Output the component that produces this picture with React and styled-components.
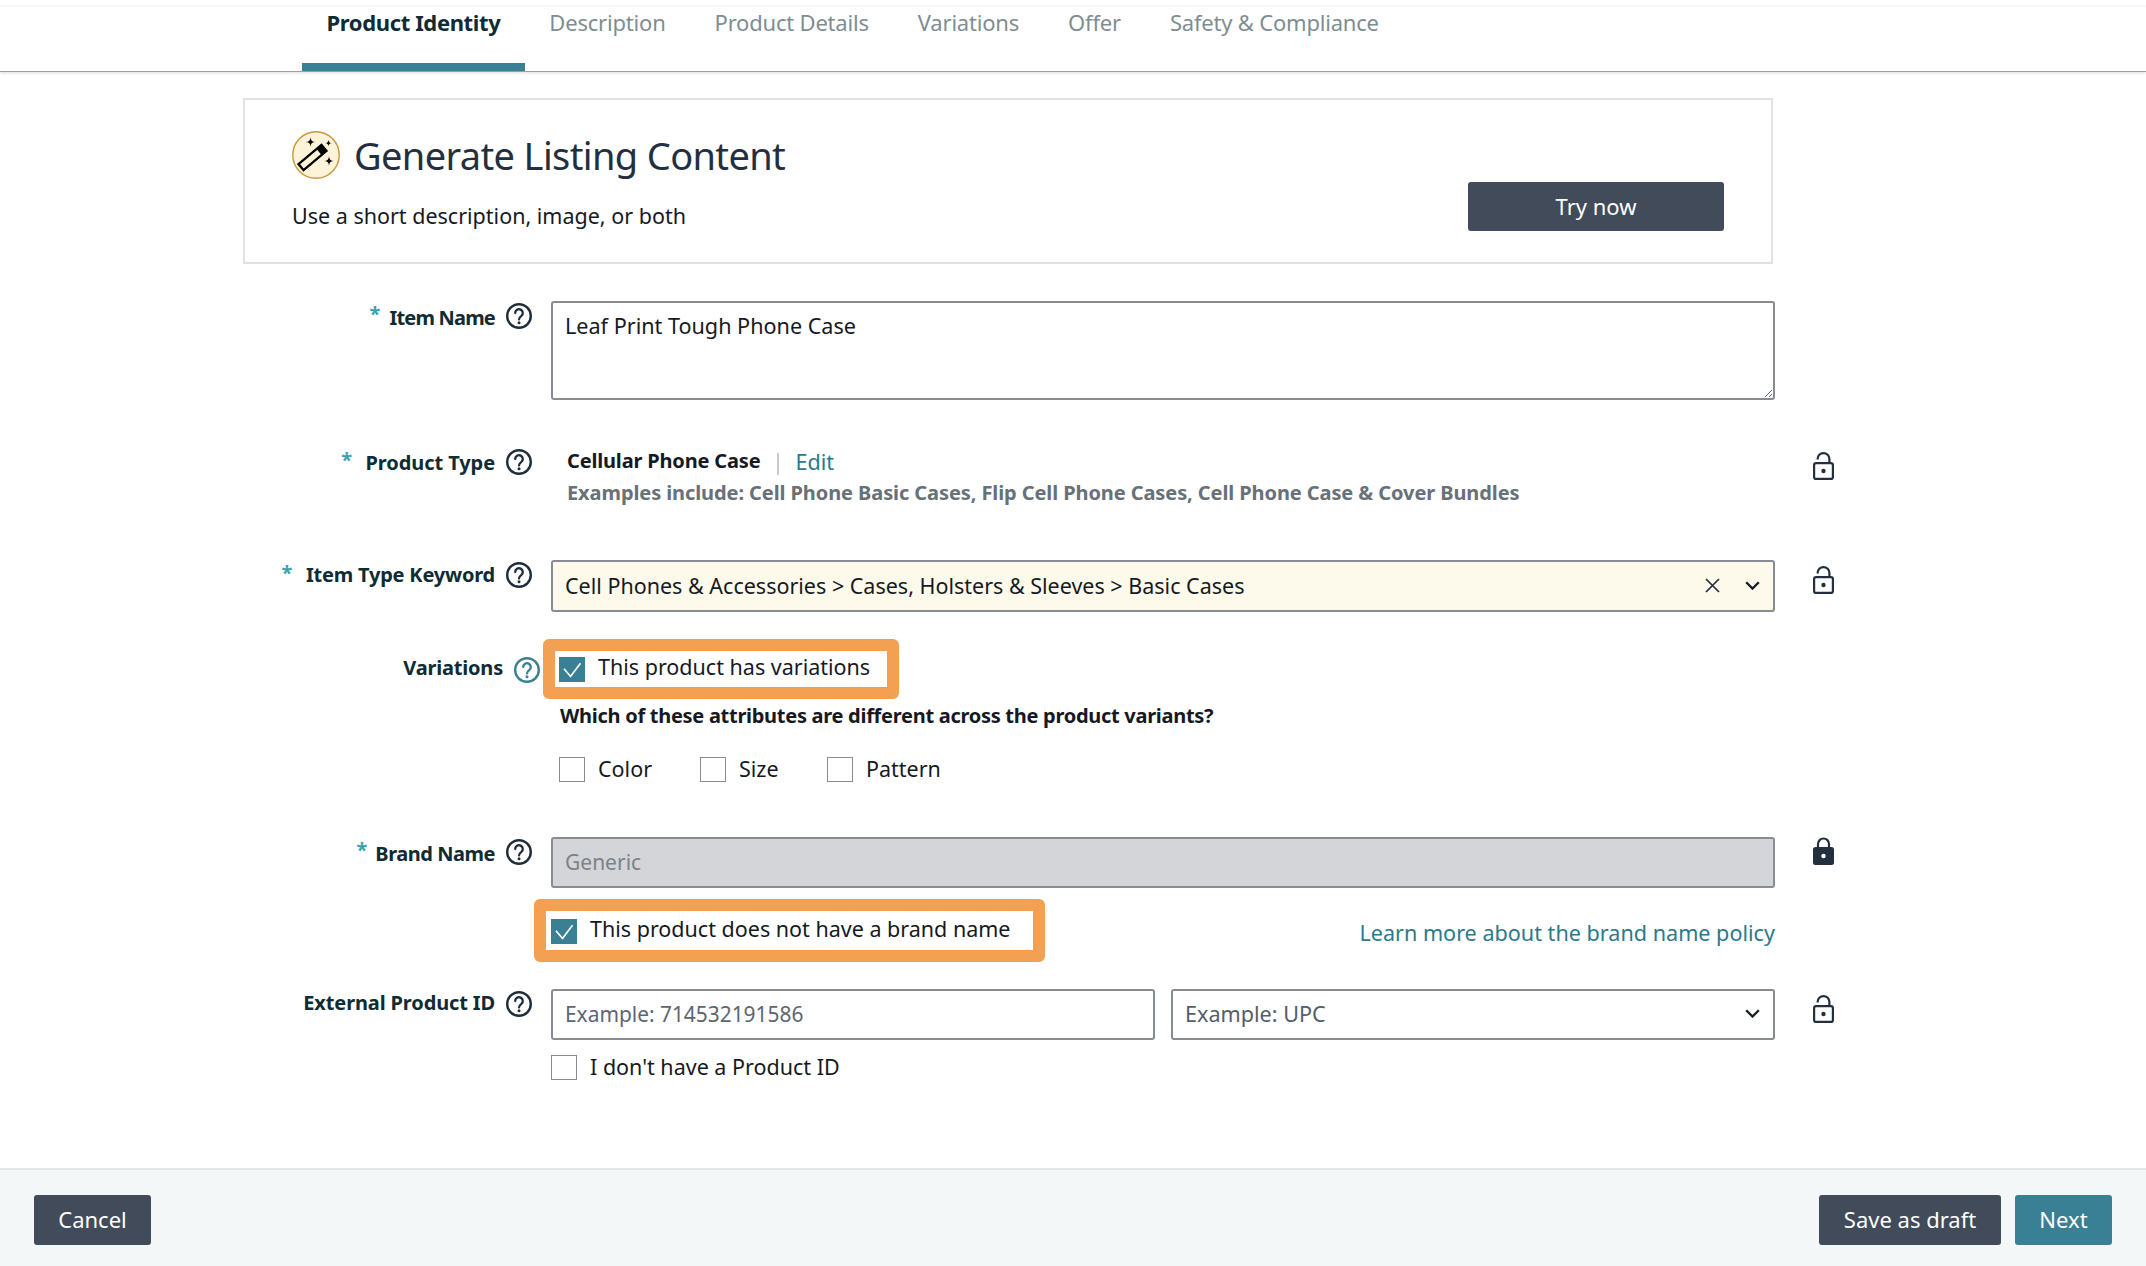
import React from "react";
import styled, { createGlobalStyle } from "styled-components";

const Global = createGlobalStyle`
  html, body { margin: 0; padding: 0; background: #fff; }
  * { box-sizing: border-box; }
  body { font-family: "Noto Sans", "Liberation Sans", sans-serif; color: #16191f; }
`;

const Page = styled.div`
  display: flex;
  flex-direction: column;
  height: 1266px;
  padding-top: 6px;
  overflow: hidden;
`;

const TabBar = styled.nav`
  display: flex;
  flex: none;
  height: 66px;
  padding-left: 302px;
  border-top: 1px solid #f4f4f4;
  border-bottom: 1px solid #9b9fa3;
  box-shadow: 0 1px 3px rgba(0, 0, 0, 0.14);
`;

const Tab = styled.div`
  padding: 0 24.5px;
  font-size: 22px;
  line-height: 30px;
  letter-spacing: ${(p) => (p.$active ? -0.37 : -0.2)}px;
  font-weight: ${(p) => (p.$active ? 700 : 400)};
  color: ${(p) => (p.$active ? "#0f2b33" : "#7f8d90")};
  border-bottom: 8px solid ${(p) => (p.$active ? "#3a8094" : "transparent")};
`;

const Card = styled.section`
  flex: none;
  display: flex;
  justify-content: space-between;
  align-items: flex-end;
  width: 1530px;
  height: 166px;
  margin: 26px 0 0 243px;
  padding: 31px 47px;
  border: 2px solid #dfe1e3;
`;

const CardLeft = styled.div`
  align-self: flex-start;
`;

const TitleRow = styled.div`
  display: flex;
  align-items: center;
  gap: 14px;
  height: 48px;
`;

const Title = styled.h1`
  margin: 0;
  font-size: 38px;
  font-weight: 400;
  letter-spacing: -0.63px;
  color: #232f3e;
`;

const CardText = styled.div`
  margin-top: 22px;
  font-size: 21.5px;
  line-height: 30px;
  color: #16191f;
`;

const Button = styled.button`
  width: ${(p) => p.$w}px;
  height: ${(p) => p.$h || 50}px;
  padding: 0 0 2px;
  border: 0;
  border-radius: 3px;
  font-family: inherit;
  font-size: 22px;
  color: #fff;
  background: ${(p) => (p.$primary ? "#3a8094" : "#414b5a")};
`;

const Form = styled.main`
  flex: 1;
  display: flex;
  flex-direction: column;
`;

const Row = styled.div`
  display: flex;
  align-items: flex-start;
  margin-top: ${(p) => p.$top}px;
`;

const LabelCell = styled.div`
  flex: none;
  display: flex;
  align-items: flex-start;
  justify-content: flex-end;
  width: ${(p) => p.$width || 551}px;
  padding-top: ${(p) => p.$pad ?? 2}px;
  padding-right: ${(p) => p.$right ?? 19}px;
`;

const LabelText = styled.span`
  font-size: 20px;
  font-weight: 700;
  line-height: 26px;
  letter-spacing: ${(p) => p.$track ?? -0.2}px;
  color: #0f2b33;
  margin: ${(p) => p.$offset ?? 2}px 11px 0 0;
`;

const Star = styled.span`
  color: #3f9fb0;
  font-weight: 700;
  font-size: 20px;
  margin-right: ${(p) => p.$gap ?? 12}px;
  position: relative;
  top: -3px;
`;

const Field = styled.div`
  flex: none;
  width: ${(p) => p.$width || 1224}px;
`;

const LockCell = styled.div`
  flex: none;
  display: flex;
  margin: ${(p) => p.$top}px 0 0 38px;
`;

const TextArea = styled.textarea`
  display: block;
  width: 100%;
  height: 99px;
  padding: 8px 12px;
  border: 2px solid #888c95;
  border-radius: 3px;
  outline: none;
  font-family: inherit;
  font-size: 21.6px;
  line-height: 30px;
  color: #16191f;
  background: #fff;
`;

const TypeBlock = styled.div`
  padding-left: 16px;
`;

const TypeLine = styled.div`
  display: flex;
  align-items: center;
  height: 26px;
`;

const TypeName = styled.span`
  font-size: 20px;
  font-weight: 700;
  color: #16191f;
  letter-spacing: -0.17px;
  margin-top: -3px;
`;

const Divider = styled.span`
  width: 2px;
  height: 22px;
  margin: 4px 16px 0 17px;
  background: #c6ccd0;
`;

const Link = styled.a`
  font-size: 21.6px;
  line-height: 26px;
  color: #2b7a8c;
`;

const Hint = styled.div`
  margin-top: 5px;
  font-size: 20px;
  font-weight: 700;
  line-height: 26px;
  letter-spacing: -0.09px;
  color: #687078;
`;

const Box = styled.div`
  display: flex;
  align-items: center;
  height: ${(p) => p.$h}px;
  padding: 0 13px 1.5px 12px;
  border: 2px solid #888c95;
  border-radius: 3px;
  font-size: ${(p) => p.$size || 21.5}px;
  color: ${(p) => p.$color || "#16191f"};
  background: ${(p) => p.$bg || "#fff"};
`;

const BoxText = styled.span`
  flex: 1;
`;

const IconGap = styled.span`
  display: flex;
  margin-right: ${(p) => p.$right}px;
`;

const Highlight = styled.div`
  display: flex;
  flex: none;
  align-items: flex-start;
  gap: 13px;
  width: ${(p) => p.$width}px;
  height: ${(p) => p.$height}px;
  padding: ${(p) => p.$pad};
  border: 12px solid #f3a052;
  border-radius: 6px;
`;

const CheckRow = styled.div`
  display: flex;
  align-items: center;
  gap: ${(p) => p.$gap || 13}px;
`;

const Check = styled.span`
  flex: none;
  display: flex;
  align-items: center;
  justify-content: center;
  width: 26px;
  height: 25px;
  border: ${(p) => (p.$on ? "none" : "1.5px solid #888c95")};
  background: ${(p) => (p.$on ? "#3a8094" : "#fff")};
`;

const CheckLabel = styled.span`
  font-size: 21.5px;
  line-height: 24px;
  margin-top: -2px;
  color: #16191f;
`;

const Question = styled.div`
  margin: 4px 0 0 17px;
  font-size: 20px;
  font-weight: 700;
  line-height: 26px;
  letter-spacing: -0.28px;
  color: #16191f;
`;

const AttrRow = styled.div`
  display: flex;
  margin: 28px 0 0 16px;
`;

const AttrItem = styled(CheckRow)`
  width: ${(p) => p.$width}px;
`;

const BrandExtras = styled.div`
  display: flex;
  justify-content: space-between;
  align-items: flex-start;
  margin: 11px 0 0 -17px;
`;

const PolicyLink = styled(Link)`
  margin-top: 21px;
`;

const IdGrid = styled.div`
  display: grid;
  grid-template-columns: 604px 604px;
  column-gap: 16px;
`;

const NoId = styled(CheckRow)`
  margin-top: 15px;
`;

const Footer = styled.footer`
  flex: none;
  display: flex;
  justify-content: space-between;
  height: 98px;
  margin-top: auto;
  padding: 25px 34px 0 34px;
  border-top: 2px solid #e3e5e6;
  background: #f4f7f8;
`;

const FooterRight = styled.div`
  display: flex;
  gap: 14px;
`;

const HelpIcon = ({ teal }) => {
  const c = teal ? "#3a8094" : "#1f2d3a";
  return (
    <svg width="26" height="26" viewBox="0 0 26 26" fill="none">
      <circle cx="13" cy="13" r="11.8" stroke={c} strokeWidth="2.4" />
      <path d="M9.2 10a3.8 3.8 0 1 1 6 3.1c-1.4 1-2.2 1.7-2.2 3.3" stroke={c} strokeWidth="2.3" strokeLinecap="round" />
      <circle cx="13" cy="19.8" r="1.5" fill={c} />
    </svg>
  );
};

const LockIcon = ({ closed }) =>
  closed ? (
    <svg width="21" height="28" viewBox="0 0 21 28" fill="none">
      <path d="M5 11V7a5.5 5.5 0 0 1 11 0v4" stroke="#232f3e" strokeWidth="2.2" />
      <rect x="0" y="10" width="21" height="18" rx="2.5" fill="#232f3e" />
      <circle cx="10.5" cy="19" r="2.2" fill="#fff" />
    </svg>
  ) : (
    <svg width="21" height="28" viewBox="0 0 21 28" fill="none">
      <path d="M4.6 7.5V7a5.9 5.9 0 0 1 11.8 0v5" stroke="#232f3e" strokeWidth="2.2" />
      <rect x="1.1" y="11.1" width="18.8" height="15.8" rx="2" stroke="#232f3e" strokeWidth="2.2" />
      <circle cx="10.5" cy="19" r="2.2" fill="#232f3e" />
    </svg>
  );

const Chevron = () => (
  <svg width="15" height="9" viewBox="0 0 15 9" fill="none">
    <path d="M1.2 1.2 7.5 7.5l6.3-6.3" stroke="#16191f" strokeWidth="2.3" />
  </svg>
);

const CloseIcon = () => (
  <svg width="15" height="15" viewBox="0 0 15 15" fill="none">
    <path d="M1 1l13 13M14 1 1 14" stroke="#232f3e" strokeWidth="1.7" />
  </svg>
);

const Tick = () => (
  <svg width="26" height="25" viewBox="0 0 26 25" fill="none">
    <path d="M5 11.8l6.5 7.7L21.5 6.3" stroke="#fff" strokeWidth="1.7" />
  </svg>
);

const star = (x, y, s) =>
  `M${x} ${y - s}Q${x} ${y} ${x + s} ${y}Q${x} ${y} ${x} ${y + s}Q${x} ${y} ${x - s} ${y}Q${x} ${y} ${x} ${y - s}Z`;

const WandIcon = () => (
  <svg width="48" height="48" viewBox="0 0 48 48" fill="none">
    <circle cx="24" cy="24" r="23.2" fill="#fdf3d8" stroke="#c9973f" strokeWidth="1.4" />
    <g transform="rotate(50 20.5 26.5)">
      <rect x="16.6" y="11.5" width="7.8" height="30" stroke="#000" strokeWidth="2.3" />
      <rect x="16.6" y="11.5" width="7.8" height="6.5" fill="#000" />
    </g>
    <path d={star(18.5, 11, 5)} fill="#000" />
    <path d={star(36.5, 12, 3.6)} fill="#000" />
    <path d={star(37, 30, 5)} fill="#000" />
  </svg>
);

const CheckBox = ({ on }) => <Check $on={on}>{on && <Tick />}</Check>;

const Label = ({ text, required, gap, teal, width, right, pad, offset, track }) => (
  <LabelCell $width={width} $right={right} $pad={pad}>
    {required && <Star $gap={gap}>*</Star>}
    <LabelText $offset={offset} $track={track}>{text}</LabelText>
    <HelpIcon teal={teal} />
  </LabelCell>
);

const tabs = ["Product Identity", "Description", "Product Details", "Variations", "Offer", "Safety & Compliance"];

export default function App() {
  return (
    <Page>
      <Global />
      <TabBar>
        {tabs.map((t, i) => (
          <Tab key={t} $active={i === 0}>
            {t}
          </Tab>
        ))}
      </TabBar>

      <Form>
        <Card>
          <CardLeft>
            <TitleRow>
              <WandIcon />
              <Title>Generate Listing Content</Title>
            </TitleRow>
            <CardText>Use a short description, image, or both</CardText>
          </CardLeft>
          <Button $w={256} $h={49}>Try now</Button>
        </Card>

        <Row $top={37}>
          <Label text="Item Name" required gap={9} track={-0.8} offset={1.5} />
          <Field>
            <TextArea readOnly defaultValue="Leaf Print Tough Phone Case" />
          </Field>
        </Row>

        <Row $top={49}>
          <Label text="Product Type" required gap={13.5} pad={0} offset={1} track={-0.08} />
          <Field>
            <TypeBlock>
              <TypeLine>
                <TypeName>Cellular Phone Case</TypeName>
                <Divider />
                <Link>Edit</Link>
              </TypeLine>
              <Hint>Examples include: Cell Phone Basic Cases, Flip Cell Phone Cases, Cell Phone Case &amp; Cover Bundles</Hint>
            </TypeBlock>
          </Field>
          <LockCell $top={3}><LockIcon /></LockCell>
        </Row>

        <Row $top={54}>
          <Label text="Item Type Keyword" required gap={13.5} offset={-0.5} />
          <Field>
            <Box $h={52} $bg="#fdf9eb">
              <BoxText>Cell Phones &amp; Accessories &gt; Cases, Holsters &amp; Sleeves &gt; Basic Cases</BoxText>
              <IconGap $right={25}><CloseIcon /></IconGap>
              <IconGap $right={0}><Chevron /></IconGap>
            </Box>
          </Field>
          <LockCell $top={6}><LockIcon /></LockCell>
        </Row>

        <Row $top={27}>
          <Label text="Variations" teal width={543} right={3} pad={18} offset={-2} />
          <Field $width={1232}>
            <Highlight $width={356} $height={60} $pad="6px 0 0 4px">
              <CheckBox on />
              <CheckLabel>This product has variations</CheckLabel>
            </Highlight>
            <Question>Which of these attributes are different across the product variants?</Question>
            <AttrRow>
              <AttrItem $width={141}><CheckBox /><CheckLabel>Color</CheckLabel></AttrItem>
              <AttrItem $width={127}><CheckBox /><CheckLabel>Size</CheckLabel></AttrItem>
              <AttrItem $width={140}><CheckBox /><CheckLabel>Pattern</CheckLabel></AttrItem>
            </AttrRow>
          </Field>
        </Row>

        <Row $top={55}>
          <Label text="Brand Name" required gap={8} track={-0.47} offset={2} />
          <Field>
            <Box $h={51} $bg="#d3d5d9" $color="#7d828a" $size={21}>Generic</Box>
            <BrandExtras>
              <Highlight $width={511} $height={63} $pad="8px 0 0 5px">
                <CheckBox on />
                <CheckLabel>This product does not have a brand name</CheckLabel>
              </Highlight>
              <PolicyLink>Learn more about the brand name policy</PolicyLink>
            </BrandExtras>
          </Field>
          <LockCell $top={0}><LockIcon closed /></LockCell>
        </Row>

        <Row $top={27}>
          <Label text="External Product ID" offset={-1} track={-0.13} />
          <Field>
            <IdGrid>
              <Box $h={51} $color="#5c6672" $size={20.9}>Example: 714532191586</Box>
              <Box $h={51} $color="#545e6b" $size={21.6}>
                <BoxText>Example: UPC</BoxText>
                <Chevron />
              </Box>
            </IdGrid>
            <NoId><CheckBox /><CheckLabel>I don't have a Product ID</CheckLabel></NoId>
          </Field>
          <LockCell $top={6}><LockIcon /></LockCell>
        </Row>

        <Footer>
          <Button $w={117}>Cancel</Button>
          <FooterRight>
            <Button $w={182}>Save as draft</Button>
            <Button $w={97} $primary>Next</Button>
          </FooterRight>
        </Footer>
      </Form>
    </Page>
  );
}
